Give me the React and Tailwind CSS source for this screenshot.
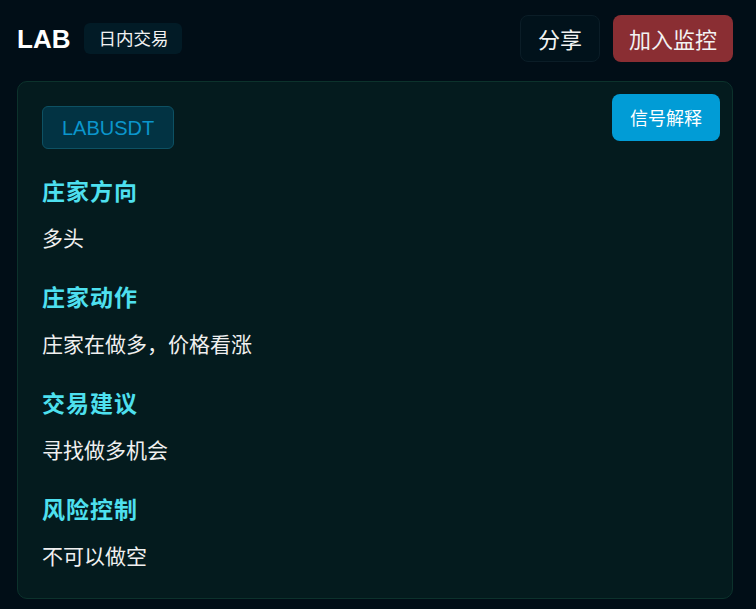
const sections = [
  { title: '庄家方向', value: '多头' },
  { title: '庄家动作', value: '庄家在做多，价格看涨' },
  { title: '交易建议', value: '寻找做多机会' },
  { title: '风险控制', value: '不可以做空' },
];

const cjk = { fontFamily: '"Noto Sans CJK SC", "Liberation Sans", sans-serif' };
const latin = { fontFamily: '"Liberation Sans", Arial, "Noto Sans CJK SC", sans-serif' };

export default function App() {
  return (
    <div className="min-h-[609px] w-full bg-[#010e17] pl-[17px] pr-[23px] pt-[15px]" style={cjk}>
      {/* Header */}
      <div className="flex h-[47px] items-center justify-between">
        <div className="flex items-center gap-[14px]">
          <span className="text-[26px] font-bold leading-none text-white" style={latin}>LAB</span>
          <span className="flex h-[31px] items-center rounded-[6px] bg-[#021b26] px-[14px] text-[17.5px] text-[#f2f2f2]">
            日内交易
          </span>
        </div>
        <div className="flex items-center gap-[13px]">
          <button className="h-[47px] rounded-[8px] border border-[#0b1d27] bg-[#01121b] px-[17px] text-[22px] text-[#f2f2f2]">
            分享
          </button>
          <button className="h-[47px] rounded-[8px] bg-[#8a2e33] px-4 text-[22px] text-[#f2f2f2]">
            加入监控
          </button>
        </div>
      </div>

      {/* Card */}
      <div className="relative mt-[19px] rounded-[10px] border border-[#0c322c] bg-[#041b1e] px-6 pb-[28px] pt-6">
        <button className="absolute right-3 top-3 h-[47px] rounded-[8px] bg-[#019cd6] px-[18px] text-[18px] text-white">
          信号解释
        </button>

        <div
          className="inline-flex h-[43px] items-center rounded-[6px] border border-[#0d5163] bg-[#023343] px-[19px] text-[20px] text-[#0b96cc]"
          style={latin}
        >
          LABUSDT
        </div>

        <div className="mt-[25px] flex flex-col gap-[28px]">
          {sections.map((s) => (
            <div key={s.title} className="flex flex-col gap-4">
              <h3 className="text-[23px] font-bold leading-[32px] tracking-[1px] text-[#4ee0ef]">{s.title}</h3>
              <p className="text-[21px] leading-[30px] text-[#f0f0f0]">{s.value}</p>
            </div>
          ))}
        </div>
      </div>
    </div>
  );
}
